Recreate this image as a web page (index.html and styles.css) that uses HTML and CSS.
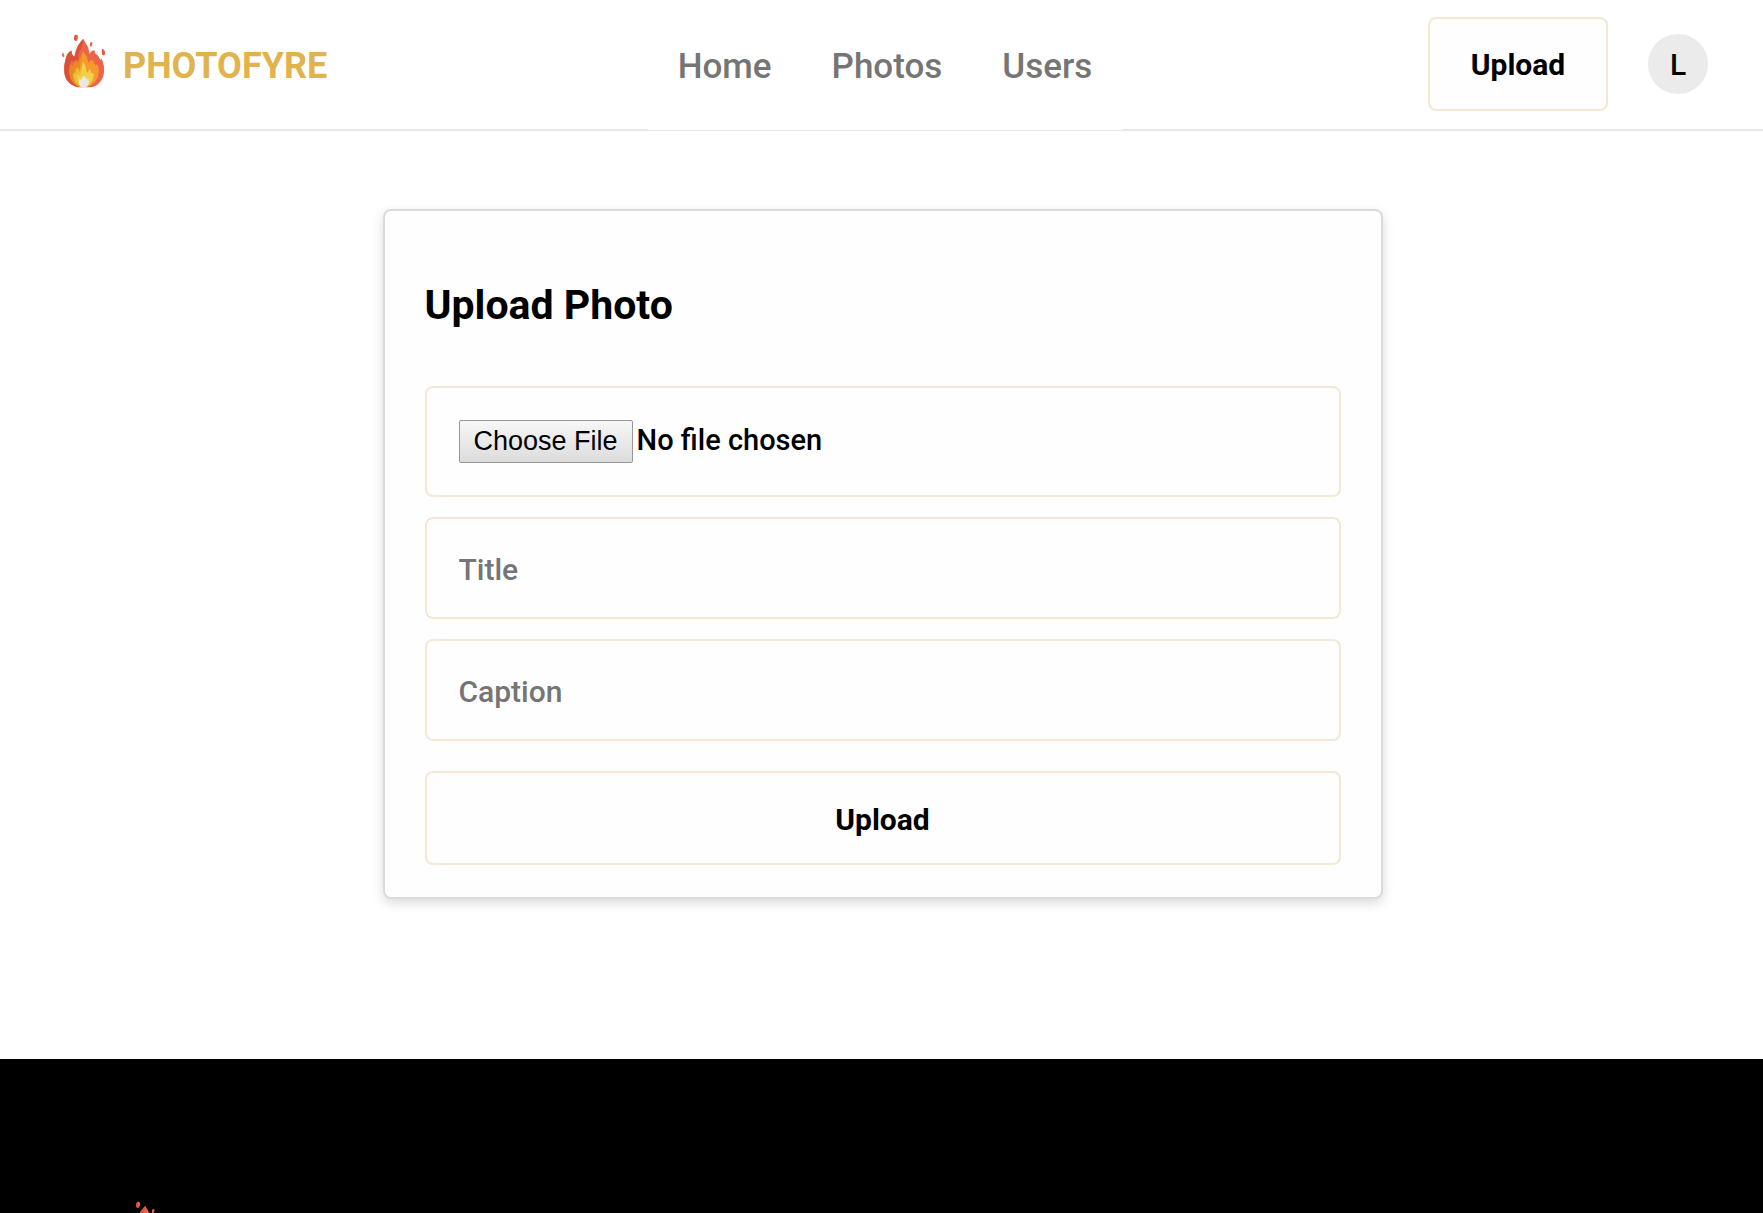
FILE: index.html
```html
<!DOCTYPE html>
<html lang="en">
<head>
<meta charset="utf-8">
<meta name="viewport" content="width=device-width, initial-scale=1">
<title>Photofyre</title>
<link rel="stylesheet" href="styles.css">
</head>
<body>
<svg class="symbols" aria-hidden="true">
  <symbol id="flame" viewBox="36 18 129 162">
    <g fill="#ec6549">
      <path d="M100 32 C103 40 111 50 115 60 C117 67 117 72 119 78 C121 71 127 67 134 67 C133 76 137 78 143 82 C146 86 149 92 151 96 L154 91 C160 104 164 119 162 132 C160 156 144 175 122 178 L82 178 C58 172 43 153 43 130 C42 115 44 104 47 94 C49 82 54 72 65 68 C64 76 67 82 73 86 C76 78 76 70 80 62 C84 50 92 41 100 32Z"/>
      <path d="M76 21 C82 19 85 23 84 29 C83 36 79 40 75 38 C71 35 72 25 76 21Z"/>
      <path d="M123 42 C128 41 128 47 126 52 C125 57 121 58 120 54 C119 50 120 44 123 42Z"/>
      <path d="M158 62 C163 64 166 71 165 78 C163 84 158 82 156 77 C155 71 155 65 158 62Z"/>
      <path d="M38 74 C42 77 44 82 42 88 C38 89 35 82 36 77Z"/>
    </g>
    <g fill="#d9513a">
      <path d="M100 32 C97 45 99 52 93 62 C87 72 83 82 86 94 L77 106 L66 96 C56 109 53 130 62 150 C67 164 76 172 88 178 C60 174 43 154 43 130 C42 115 44 104 47 94 C49 82 54 72 65 68 C64 76 67 82 73 86 C76 78 76 70 80 62 C84 50 92 41 100 32Z"/>
      <path d="M76 21 L80 21 C76 27 77 33 80 37 C77 40 73 38 72 34 C72 29 73 24 76 21Z"/>
      <path d="M158 62 C158 69 159 75 163 80 C159 83 157 79 156 75 C155 70 156 65 158 62Z"/>
    </g>
    <path fill="#f59b2c" d="M99 70 C105 78 111 84 112 93 L115 105 C118 99 123 96 129 97 C130 105 134 107 137 113 L141 109 C146 118 148 127 145 139 C142 159 127 174 108 178 L94 178 C75 173 60 158 59 137 C57 124 61 117 63 109 L69 116 C69 108 73 101 80 95 C81 101 83 105 85 108 C86 94 95 83 99 70Z"/>
    <path fill="#e88a22" d="M99 70 C97 86 94 94 91 106 L88 124 L78 117 L71 132 C67 149 78 168 98 178 C76 174 60 158 59 137 C57 124 61 117 63 109 L69 116 C69 108 73 101 80 95 C81 101 83 105 85 108 C86 94 95 83 99 70Z"/>
    <path fill="#f4d04a" d="M99 101 C104 110 109 115 108 128 L112 135 L119 121 C122 127 123 133 126 137 L130 134 C134 151 124 172 104 178 L97 178 C80 173 68 157 71 136 L77 139 C77 130 80 125 84 120 C85 126 86 130 88 134 C94 123 96 113 99 101Z"/>
    <path fill="#e9bd36" d="M99 101 C98 120 94 130 91 146 L83 138 C78 153 84 170 99 178 C80 173 68 157 71 136 L77 139 C77 130 80 125 84 120 C85 126 86 130 88 134 C94 123 96 113 99 101Z"/>
    <path fill="#eae7e3" d="M103 143 C106 149 109 151 111 155 L115 151 C119 162 115 174 105 180 L99 180 C89 176 84 166 88 153 L93 157 C94 150 98 147 103 143Z"/>
  </symbol>
</svg>

<header class="header">
  <a class="brand" href="#">
    <svg class="flame" aria-hidden="true"><use href="#flame"/></svg>
    <span class="brand-name">PHOTOFYRE</span>
  </a>
  <nav class="nav">
    <a href="#">Home</a>
    <a href="#">Photos</a>
    <a href="#">Users</a>
  </nav>
  <div class="actions">
    <button class="button" type="button">Upload</button>
    <a class="avatar" href="#">L</a>
  </div>
</header>

<main class="main">
  <form class="card">
    <h1 class="card-title">Upload Photo</h1>
    <div class="fields">
      <input class="field file" type="file" aria-label="Photo">
      <input class="field" type="text" placeholder="Title" aria-label="Title">
      <input class="field" type="text" placeholder="Caption" aria-label="Caption">
    </div>
    <button class="button submit" type="button">Upload</button>
  </form>
</main>

<footer class="footer">
  <svg class="flame" aria-hidden="true"><use href="#flame"/></svg>
</footer>
</body>
</html>
```
FILE: styles.css
```css
* {
  box-sizing: border-box;
}

body {
  display: flex;
  flex-direction: column;
  height: 100vh;
  margin: 0;
  background: #fff;
  color: #000;
  font-family: Roboto, "Liberation Sans", sans-serif;
}

a {
  color: inherit;
  text-decoration: none;
}

.symbols {
  position: absolute;
  width: 0;
  height: 0;
}

.flame {
  display: block;
  width: 43px;
  height: 54px;
}

.header {
  display: grid;
  grid-template-columns: 1fr auto 1fr;
  align-items: center;
  flex: none;
  height: 131px;
  padding: 0 55px 0 62px;
  border-bottom: 2px solid #e6e6eb;
}

.brand {
  display: flex;
  align-items: center;
  gap: 18px;
  padding-bottom: 8px;
  color: #e0b34f;
  font-size: 36px;
  font-weight: 700;
}

.brand-name {
  padding-top: 10px;
}

/* The menu is one pixel taller than the bar and thins its bottom rule. */
.nav {
  display: flex;
  align-items: center;
  gap: 60px;
  height: 130px;
  margin-bottom: -1px;
  padding: 2px 30px 0;
  background: #fff;
  color: #757575;
  font-size: 35px;
  font-weight: 500;
}

.actions {
  display: flex;
  justify-content: flex-end;
  align-items: center;
  gap: 40px;
  padding-bottom: 2px;
}

.button {
  width: 180px;
  height: 94px;
  padding: 2px 0 0;
  border: 2px solid #f3e8d4;
  border-radius: 8px;
  background: #fefefe;
  color: #000;
  font: 700 30px Roboto, "Liberation Sans", sans-serif;
}

.avatar {
  display: flex;
  justify-content: center;
  align-items: center;
  width: 60px;
  height: 60px;
  padding-top: 2px;
  border-radius: 50%;
  background: #ebebeb;
  font-size: 30px;
  font-weight: 500;
}

.main {
  flex: none;
  padding: 78px 20px 160px 22px;
}

.card {
  max-width: 1000px;
  margin: 0 auto;
  padding: 70px 40px 32px;
  border: 2px solid #dbdbdb;
  border-radius: 8px;
  background: #fefefe;
  box-shadow: 0 4px 12px rgba(0, 0, 0, 0.15);
}

.card-title {
  margin: 0 0 57px;
  font-size: 41px;
  font-weight: 700;
  line-height: 48px;
}

.fields {
  display: grid;
  gap: 20px;
}

.field {
  width: 100%;
  height: 102px;
  padding: 2px 32px 0;
  border: 2px solid #f3e8d4;
  border-radius: 8px;
  background: #fefefe;
  color: #000;
  font: 500 30px Roboto, "Liberation Sans", sans-serif;
}

.field::placeholder {
  color: #757575;
  opacity: 1;
}

.file {
  height: 111px;
  padding: 32px;
  font-size: 29px;
}

.file::file-selector-button {
  height: 43px;
  margin: 0 4px 0 0;
  padding: 0 14px;
  border: 1px solid #979797;
  border-radius: 2px;
  background: linear-gradient(#f7f7f7, #dcdcdc);
  color: #000;
  font: 400 27px "Liberation Sans", sans-serif;
}

.submit {
  width: 100%;
  margin-top: 30px;
}

.footer {
  flex: 1 1 0;
  min-height: 0;
  overflow: hidden;
  padding: 142px 124px 0;
  background: #000;
}
```
